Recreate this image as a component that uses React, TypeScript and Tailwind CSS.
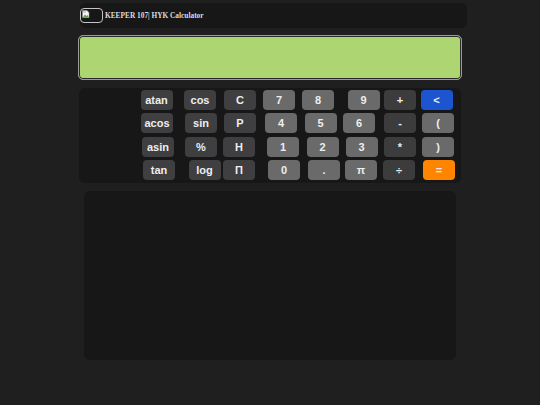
const dark = "bg-[#3f3f41] text-[#eeeeee]";
const mid = "bg-[#6a6a6a] text-[#eeeeee]";
const op = "bg-[#3c3c3c] text-[#eeeeee]";

type Key = { label: string; cls: string; ml: string };

const rows: { pl: string; mt: string; keys: Key[] }[] = [
  {
    pl: "pl-[61.5px]",
    mt: "",
    keys: [
      { label: "atan", cls: dark, ml: "" },
      { label: "cos", cls: dark, ml: "ml-[11.5px]" },
      { label: "C", cls: dark, ml: "ml-[8px]" },
      { label: "7", cls: mid, ml: "ml-[7px]" },
      { label: "8", cls: mid, ml: "ml-[7px]" },
      { label: "9", cls: mid, ml: "ml-[13.5px]" },
      { label: "+", cls: op, ml: "ml-[4.5px]" },
      { label: "<", cls: "bg-[#1d55d0] text-[#eeeeee]", ml: "ml-[4.5px]" },
    ],
  },
  {
    pl: "pl-[62px]",
    mt: "mt-[3px]",
    keys: [
      { label: "acos", cls: dark, ml: "" },
      { label: "sin", cls: dark, ml: "ml-[12px]" },
      { label: "P", cls: dark, ml: "ml-[7px]" },
      { label: "4", cls: mid, ml: "ml-[9px]" },
      { label: "5", cls: mid, ml: "ml-[7.5px]" },
      { label: "6", cls: mid, ml: "ml-[6.5px]" },
      { label: "-", cls: op, ml: "ml-[9px]" },
      { label: "(", cls: mid, ml: "ml-[6px]" },
    ],
  },
  {
    pl: "pl-[63px]",
    mt: "mt-[4px]",
    keys: [
      { label: "asin", cls: dark, ml: "" },
      { label: "%", cls: dark, ml: "ml-[11px]" },
      { label: "H", cls: dark, ml: "ml-[6px]" },
      { label: "1", cls: mid, ml: "ml-[12px]" },
      { label: "2", cls: mid, ml: "ml-[7.5px]" },
      { label: "3", cls: mid, ml: "ml-[7px]" },
      { label: "*", cls: op, ml: "ml-[6.5px]" },
      { label: ")", cls: mid, ml: "ml-[6px]" },
    ],
  },
  {
    pl: "pl-[64px]",
    mt: "mt-[3px]",
    keys: [
      { label: "tan", cls: dark, ml: "" },
      { label: "log", cls: dark, ml: "ml-[13.5px]" },
      { label: "Π", cls: dark, ml: "ml-[2.5px]" },
      { label: "0", cls: mid, ml: "ml-[13px]" },
      { label: ".", cls: mid, ml: "ml-[8px]" },
      { label: "π", cls: mid, ml: "ml-[5px]" },
      { label: "÷", cls: op, ml: "ml-[6px]" },
      { label: "=", cls: "bg-[#ff8500] text-[#eeeeee]", ml: "ml-[8px]" },
    ],
  },
];

function BrokenImage() {
  return (
    <svg width="8" height="8" viewBox="0 0 16 16" className="shrink-0">
      <path d="M1 1h9l4 4v10H1z" fill="#f4f4f4" stroke="#9a9a9a" />
      <path d="M2 14l4-5 3 3 2-2 2 3v1H2z" fill="#5fa04e" />
      <path d="M2 2h6v4H2z" fill="#bcd4f6" />
    </svg>
  );
}

export default function App() {
  return (
    <div className="min-h-[405px] w-[540px] overflow-hidden bg-[#1f1f1f] font-['Liberation_Sans',Arial,sans-serif]">
      <div className="pt-[3px] pl-[80px]">
        <header className="flex h-[25px] w-[387px] items-center rounded-md bg-[#171717]">
          <div className="flex h-[15px] w-[23px] rounded-[4px] border border-[#c4c4c4] pl-[0.5px] pt-[0.5px]">
            <BrokenImage />
          </div>
          <h1 className="ml-[2px] whitespace-nowrap font-['Liberation_Serif',serif] text-[7.35px] font-bold text-[#dcdcdc]">
            KEEPER 107| HYK Calculator
          </h1>
        </header>
      </div>

      <div className="mt-[7px] ml-[78px] h-[45px] w-[384px] rounded-[5px] border border-[#9a9a9a] bg-[#add673] shadow-[inset_0_0_0_1px_#2b2b2b]" />

      <div className="mt-[8px] ml-[79px] h-[95px] w-[382px] rounded-md bg-[#171717] pt-[2px]">
        {rows.map((row) => (
          <div key={row.keys[0].label} className={`flex ${row.pl} ${row.mt}`}>
            {row.keys.map((k) => (
              <button
                key={k.label}
                className={`flex h-[20px] w-[32px] shrink-0 items-center justify-center rounded-[4px] text-[11px] font-bold ${k.cls} ${k.ml}`}
              >
                {k.label}
              </button>
            ))}
          </div>
        ))}
      </div>

      <div className="mt-[8px] ml-[84px] h-[169px] w-[372px] rounded-md bg-[#171717]" />
    </div>
  );
}
